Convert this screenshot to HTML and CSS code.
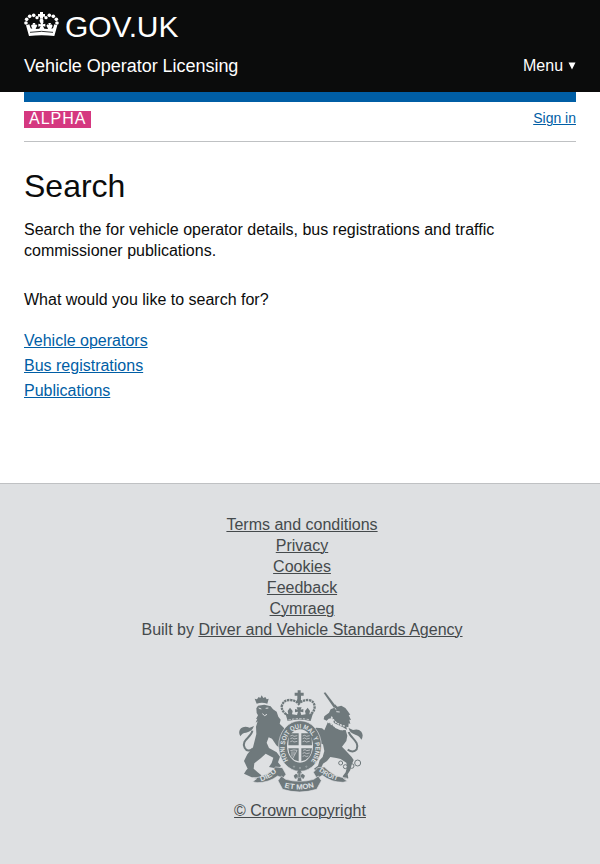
FILE: index.html
```html
<!DOCTYPE html>
<html lang="en">
<head>
<meta charset="utf-8">
<title>Search - Vehicle Operator Licensing - GOV.UK</title>
<link rel="stylesheet" href="styles.css">
</head>
<body>
<header class="header">
  <a class="logo" href="#">
    <svg class="crown" viewBox="6 9 105 84" aria-hidden="true">
      <g fill="#fff">
        <path d="M54 12h9v6h6v8h-6v6h-9v-6h-6v-8h6z"/>
        <circle cx="58.500" cy="38" r="6"/>
        <circle cx="45" cy="29" r="5"/><circle cx="72" cy="29" r="5"/>
        <circle cx="35" cy="22" r="5.500"/><circle cx="82" cy="22" r="5.500"/>
        <circle cx="23" cy="25" r="5.500"/><circle cx="94" cy="25" r="5.500"/>
        <circle cx="14" cy="34" r="5.500"/><circle cx="103" cy="34" r="5.500"/>
        <circle cx="12" cy="45" r="5.500"/><circle cx="105" cy="45" r="5.500"/>
        <path d="M12 52l10-3 4 12 5 1-2-4-2-5 4-4 3 2-2-6h8l-2 6 4-2 4 4-3 5-2 5 11-1 4-8-7 2v-9l8 2-3-8h11l-3 8 8-2v9l-7-2 4 8 11 1-2-5-3-5 4-4 4 2-2-6h8l-2 6 3-2 4 4-2 5-2 4 5-1 4-12 9 3-9 32q-38-5-76 0z"/>
      </g>
      <path d="M24 73q35-6 69 0" fill="none" stroke="#0b0c0c" stroke-width="2.500"/>
    </svg>
    <span>GOV.UK</span>
  </a>
  <div class="service">
    <a class="service-name" href="#">Vehicle Operator Licensing</a>
    <a class="menu" href="#">Menu <svg class="arrow" viewBox="0 0 8 8" aria-hidden="true"><path d="M.500.500h7L4 7.500z" fill="#fff"/></svg></a>
  </div>
</header>
<div class="phase">
  <strong class="tag">ALPHA</strong>
  <a class="signin" href="#">Sign in</a>
</div>
<main class="main">
  <h1>Search</h1>
  <p class="intro">Search the for vehicle operator details, bus registrations and traffic commissioner publications.</p>
  <p class="question">What would you like to search for?</p>
  <ul class="links">
    <li><a href="#">Vehicle operators</a></li>
    <li><a href="#">Bus registrations</a></li>
    <li><a href="#">Publications</a></li>
  </ul>
</main>
<footer class="footer">
  <ul>
    <li><a href="#">Terms and conditions</a></li>
    <li><a href="#">Privacy</a></li>
    <li><a href="#">Cookies</a></li>
    <li><a href="#">Feedback</a></li>
    <li><a href="#">Cymraeg</a></li>
    <li>Built by <a href="#">Driver and Vehicle Standards Agency</a></li>
  </ul>
  <a class="copyright" href="#">
    <svg class="crest" viewBox="9 6 378 318" aria-hidden="true">
      <defs>
        <path id="motto" d="M163 223A46 58 0 1 1 233 223"/>
        <path id="dieu" d="M81 286Q108 278 132 255"/>
        <path id="mon" d="M151 304Q197 317 243 302"/>
        <path id="droit" d="M254 255Q280 276 314 285"/>
      </defs>
      <g class="ink">
        <!-- lion -->
        <path d="M68 53l-6-15 7 2 5-7 5 3 4-8 5 8 6-3 4 7 6-2-4 15q-16-5-32 0z"/>
        <path d="M67 67L72 59 91 56 110 61 117 70 128 77 133 92 140 101 137 113 150 126 149 150 139 165 151 187 143 191 127 178 114 158 104 154 98 170 105 186 128 199 138 212 132 229 141 240 131 248 105 243 113 231 118 215 95 203 81 216 61 232 59 248 71 259 82 268 79 275 53 274 30 263 37 252 41 248 30 225 40 205 57 184 62 164 67 144 66 122 71 106 65 110 70 98 66 99 72 88 68 81z"/>
        <path d="M19 151q-8-14 2-24 9-8 26-2l13-5q-6 17-24 20-12 1-17 11z"/>
        <!-- unicorn -->
        <path d="M269 21l5-2 32 42-6 5z"/>
        <path d="M301 65l2-10 7 7 12-3 12 7 7 9 8 11-5 1 7 15-5-1 3 13-5-2-1 12-6-2 2 9-12-7-27-13-5-15-11 2-6 6-9-4 2-9 14-11 5-10z"/>
        <path d="M282 107l12 7 10 12 16 7 15-1 5 17-3 16-13 17 13 14 16 17 6 9-6 14-4 16-8 13 2 12-13 2-4-8 9-12 4-16-2-13-17-11-13-3-18-3-10 12-12 8-7 17-14 5-6-7 12-9 5-16 9-10 5-18-4-20-15-4-13 6-11 10-7-3 3-9 9-9-11-5-3-13 6-3 5 12 13 3 15-3-7-11-13-9-1-7 10-5 17 2 7 6z"/>
        <path d="M382 161q8-13 0-24-9-10-25-5l-13-6q2 15 20 20 12 3 18 15z"/>
        <!-- imperial crown -->
        <path d="M191 13h9v7h9v9h-8v12h-11V29h-8v-9h9z"/>
        <circle cx="195" cy="45" r="7"/>
        <path d="M154 82l9 3-2-10 7-10 8 10-2 10 15 2 3-10-9 2v-10l8 2-3-7h15l-3 7 8-2v10l-9-2 3 10 13-2-2-10 8-10 7 10-2 10 11-3-7 23q-34-9-69 0z"/>
      </g>
      <g class="line">
        <path d="M157 85q-14-9-14-24 5-19 23-19 18 0 28 12 10-12 29-12 17 2 19 19 0 16-13 24" stroke-width="7" stroke-dasharray="7 2"/>
        <path d="M56 188q-15 13-24-3c-12-23 22-32 23-51" stroke-width="6"/>
        <path d="M341 191q17 11 27-1c10-23-19-34-24-52" stroke-width="6"/>
        <g stroke-width="3">
          <circle cx="320" cy="231" r="6"/><circle cx="334" cy="242" r="6"/>
          <circle cx="353" cy="240" r="7"/><circle cx="371" cy="231" r="9"/><circle cx="340" cy="213" r="6"/>
        </g>
      </g>
      <ellipse class="garter" cx="198" cy="180" rx="64" ry="76"/>
      <ellipse class="field" cx="198" cy="180" rx="39" ry="50"/>
      <g class="ink">
        <path d="M167 142h27v36h-31q-1-18 4-36zM202 142h27q6 18 5 36h-32zM163 187h31v39q-29-4-31-39zM202 187h32q-2 34-32 39z"/>
      </g>
      <g class="paper">
        <path d="M169 150q7-5 11 1l10-2M169 158q7-5 11 1l10-2M169 167q7-5 11 1l10-2M206 150q7-5 11 1l10-2M206 158q7-5 11 1l10-2M206 167q7-5 11 1l10-2M169 194q11-4 20-1l-13 25M174 196v16M180 196v12M207 193q7-5 11 1l10-2M206 202q7-5 11 1l10-2M206 211q7-5 11 1l6-2" stroke-width="2"/>
        <path d="M163 102q34-8 66 0" stroke-width="2.500" stroke-dasharray="7 4"/>
        <path d="M74 66l8 3M95 67l8-1M85 83l7 6 7-4" stroke-width="3"/>
        <path d="M292 92q12 23 43 29M282 107q20 17 46 25" stroke-width="4" stroke-dasharray="6 3"/>
        <path d="M307 77l10 1M302 66l5 5" stroke-width="3"/>
        <circle cx="180" cy="242" r="2"/><circle cx="198" cy="246" r="2"/><circle cx="217" cy="242" r="2"/>
      </g>
      <g class="ribbon">
        <path d="M57 277q41-5 68-34l20 2 11 20-9 12-16-7q-26 20-62 20l-13-3 12-9z"/>
        <path d="M339 277q-41-5-68-34l-20 2-13 14 11 19 16-10q26 21 62 21l13-3-12-9z"/>
        <path d="M132 284l10-14 13 10q42 12 84 0l14-10 9 14-14 26q-52 16-102 0z"/>
      </g>
      <path class="ink" d="M190 286l2-10-9 2-4-9 7-6 6 4-3-8 7-9 7 9-3 8 6-4 7 6-4 9-8-2 2 10z"/>
      <path class="paper" d="M192 260v13M199 260v13M187 275h18" stroke-width="1.500"/>
      <g class="lettering">
        <text font-size="20"><textPath href="#motto" textLength="247" lengthAdjust="spacingAndGlyphs">HONI SOIT QUI MAL Y PENSE</textPath></text>
        <text font-size="21"><textPath href="#dieu" textLength="56" lengthAdjust="spacingAndGlyphs">DIEU</textPath></text>
        <text font-size="22"><textPath href="#mon" textLength="91" lengthAdjust="spacingAndGlyphs">ET MON</textPath></text>
        <text font-size="20"><textPath href="#droit" textLength="63" lengthAdjust="spacingAndGlyphs">DROIT</textPath></text>
      </g>
    </svg>
    <span>© Crown copyright</span>
  </a>
</footer>
</body>
</html>
```
FILE: styles.css
```css
* { box-sizing: border-box; }
body {
  margin: 0;
  color: #0b0c0c;
  background: #fff;
  font: 16px/21px "Liberation Sans", Arial, sans-serif;
}
h1, p, ul { margin: 0; padding: 0; font-weight: 400; }
ul { list-style: none; }
a { color: #005ea5; text-underline-offset: 1px; text-decoration-thickness: 1px; }
.header { height: 92px; padding: 10px 24px 0; background: #0b0c0c; }
.header a { color: #fff; text-decoration: none; }
.logo { display: flex; height: 34px; font-size: 30px; line-height: 34px; letter-spacing: -.1px; }
.crown { width: 35px; height: 28px; margin: 1px 6px 0 0; }
.service { display: flex; justify-content: space-between; margin-top: 12px; }
.service-name { font-size: 18px; letter-spacing: -.03px; }
.menu { line-height: 20px; }
.arrow { width: 8px; height: 8px; vertical-align: 1px; margin-right: .5px; }
.phase {
  display: flex;
  justify-content: space-between;
  height: 50px;
  margin: 0 24px;
  padding-top: 9px;
  border-top: 10px solid #005ea5;
  border-bottom: 1px solid #bfc1c3;
}
.tag {
  width: 67px;
  height: 17px;
  padding-left: 5px;
  color: #fff;
  background: #d53880;
  font-weight: 400;
  line-height: 16px;
  letter-spacing: 1px;
}
.signin { font-size: 14px; line-height: 15px; }
.main { height: 341px; padding: 26px 24px 0; }
h1 { font-size: 32px; line-height: 36px; }
.intro { margin-top: 15px; }
.question { margin-top: 28px; }
.links { margin-top: 18px; }
.links li { height: 25px; line-height: 25px; }
.footer {
  height: 381px;
  padding: 30px 0 0 4px;
  border-top: 1px solid #bfc1c3;
  color: #454a4c;
  background: #dee0e2;
  text-align: center;
}
.footer a { color: #454a4c; }
.copyright { display: flex; flex-direction: column; align-items: center; width: 592px; margin-top: 48px; }
.crest { width: 126px; height: 106px; margin: 0 0 6px; }
.ink { fill: #6f797c; }
.line { fill: none; stroke: #6f797c; }
.paper { fill: none; stroke: #dee0e2; }
.garter, .ribbon { fill: #6f797c; stroke: #dee0e2; stroke-width: 2; }
.field { fill: #dee0e2; }
.lettering { fill: #dee0e2; font-family: "Liberation Sans", Arial, sans-serif; font-weight: 700; }
```
